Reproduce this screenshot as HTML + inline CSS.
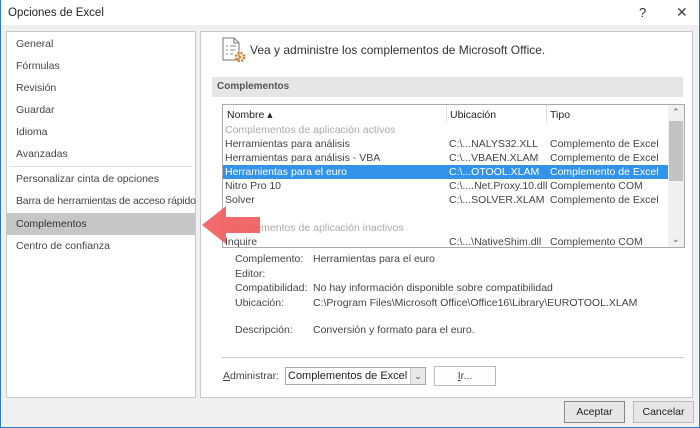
<!DOCTYPE html>
<html><head><style>
*{margin:0;padding:0;box-sizing:border-box}
body{width:700px;height:428px;background:#f0f0f0;font-family:"Liberation Sans",sans-serif;font-size:10.5px;color:#444;position:relative;overflow:hidden}
.a{position:absolute;white-space:nowrap}
.win{position:absolute;left:0;top:0;width:700px;height:428px;border:1px solid #2b79c9;border-top:none}
</style></head><body>
<div class="win"></div>
<div class="a" style="left:1px;top:0;width:698px;height:25px;background:#fff"></div>
<div class="a" style="left:8px;top:7px;font-size:11.5px;color:#222">Opciones de Excel</div>
<div class="a" style="left:639px;top:5px;font-size:13px;color:#333">?</div>
<div class="a" style="left:676px;top:4px;font-size:14px;color:#444;font-weight:300">✕</div>

<div class="a" style="left:6px;top:31px;width:190px;height:367px;background:#fff;border:1px solid #c8c8c8;overflow:hidden"></div>
<div class="a" style="left:16px;top:38px">General</div>
<div class="a" style="left:16px;top:60px">Fórmulas</div>
<div class="a" style="left:16px;top:82px">Revisión</div>
<div class="a" style="left:16px;top:104px">Guardar</div>
<div class="a" style="left:16px;top:126px">Idioma</div>
<div class="a" style="left:16px;top:148px">Avanzadas</div>
<div class="a" style="left:10px;top:166px;width:182px;height:1px;background:#ddd"></div>
<div class="a" style="left:16px;top:173px">Personalizar cinta de opciones</div>
<div class="a" style="left:16px;top:195px;letter-spacing:-0.2px">Barra de herramientas de acceso rápido</div>
<div class="a" style="left:7px;top:213px;width:188px;height:22px;background:#c6c6c6"></div>
<div class="a" style="left:16px;top:218px;color:#333">Complementos</div>
<div class="a" style="left:16px;top:240px">Centro de confianza</div>

<div class="a" style="left:200px;top:31px;width:493px;height:367px;background:#fff;border:1px solid #c8c8c8"></div>
<svg class="a" style="left:222px;top:37px" width="24" height="26" viewBox="0 0 24 26"><path d="M1 1h11l5 5v17H1z" fill="#fff" stroke="#777"/><path d="M12 1v5h5" fill="none" stroke="#777"/><path d="M4 9h2M8 9h6M4 13h2M8 13h5M4 17h2M8 17h3" stroke="#888"/><circle cx="18" cy="20" r="4" fill="none" stroke="#e07b22" stroke-width="2.5" stroke-dasharray="2 1.2"/><circle cx="18" cy="20" r="1.3" fill="#e07b22"/></svg>
<div class="a" style="left:250px;top:43px;font-size:12px;color:#333">Vea y administre los complementos de Microsoft Office.</div>
<div class="a" style="left:212px;top:77px;width:471px;height:20px;background:#e6e6e6"></div>
<div class="a" style="left:217px;top:81px;font-weight:bold;color:#555;font-size:10px">Complementos</div>

<div class="a" style="left:222px;top:104px;width:463px;height:144px;border:1px solid #aaa;background:#fff"></div>
<div class="a" style="left:446px;top:105px;width:1px;height:17px;background:#e0e0e0"></div>
<div class="a" style="left:546px;top:105px;width:1px;height:17px;background:#e0e0e0"></div>
<div class="a" style="left:227px;top:109px;color:#222">Nombre ▴</div>
<div class="a" style="left:450px;top:109px;color:#222">Ubicación</div>
<div class="a" style="left:550px;top:109px;color:#222">Tipo</div>
<div class="a" style="left:668px;top:105px;width:16px;height:142px;background:#f0f0f0"></div>
<div class="a" style="left:669px;top:121px;width:14px;height:60px;background:#c2c2c2"></div>
<div class="a" style="left:672px;top:107px;font-size:9px;color:#555">⌃</div>
<div class="a" style="left:672px;top:234px;font-size:9px;color:#555">⌄</div>
<div class="a" style="left:225px;top:124px;color:#aaa">Complementos de aplicación activos</div>
<div class="a" style="left:225px;top:138px">Herramientas para análisis</div><div class="a" style="left:449px;top:138px">C:\...NALYS32.XLL</div><div class="a" style="left:550px;top:138px">Complemento de Excel</div>
<div class="a" style="left:225px;top:152px">Herramientas para análisis - VBA</div><div class="a" style="left:449px;top:152px">C:\...VBAEN.XLAM</div><div class="a" style="left:550px;top:152px">Complemento de Excel</div>
<div class="a" style="left:223px;top:165px;width:445px;height:14px;background:#3393ea"></div>
<div class="a" style="left:225px;top:166px;color:#fff">Herramientas para el euro</div><div class="a" style="left:449px;top:166px;color:#fff">C:\...OTOOL.XLAM</div><div class="a" style="left:550px;top:166px;color:#fff">Complemento de Excel</div>
<div class="a" style="left:225px;top:180px">Nitro Pro 10</div><div class="a" style="left:449px;top:180px">C:\....Net.Proxy.10.dll</div><div class="a" style="left:550px;top:180px">Complemento COM</div>
<div class="a" style="left:225px;top:194px">Solver</div><div class="a" style="left:449px;top:194px">C:\...SOLVER.XLAM</div><div class="a" style="left:550px;top:194px">Complemento de Excel</div>
<div class="a" style="left:225px;top:222px;color:#aaa">Complementos de aplicación inactivos</div>
<div class="a" style="left:225px;top:236px">Inquire</div><div class="a" style="left:449px;top:236px">C:\...\NativeShim.dll</div><div class="a" style="left:550px;top:236px">Complemento COM</div>

<div class="a" style="left:235px;top:253px">Complemento:</div><div class="a" style="left:313px;top:253px">Herramientas para el euro</div>
<div class="a" style="left:235px;top:268px">Editor:</div>
<div class="a" style="left:235px;top:282px">Compatibilidad:</div><div class="a" style="left:313px;top:282px">No hay información disponible sobre compatibilidad</div>
<div class="a" style="left:235px;top:297px">Ubicación:</div><div class="a" style="left:313px;top:297px">C:\Program Files\Microsoft Office\Office16\Library\EUROTOOL.XLAM</div>
<div class="a" style="left:235px;top:324px">Descripción:</div><div class="a" style="left:313px;top:324px">Conversión y formato para el euro.</div>
<div class="a" style="left:222px;top:357px;width:462px;height:1px;background:#ccc"></div>
<div class="a" style="left:223px;top:370px"><u>A</u>dministrar:</div>
<div class="a" style="left:285px;top:367px;width:141px;height:18px;border:1px solid #aaa;background:#fff"></div>
<div class="a" style="left:288px;top:370px;color:#222;font-size:11px">Complementos de Excel</div>
<div class="a" style="left:410px;top:368px;width:15px;height:16px;background:#e8e8e8;border-left:1px solid #ccc;text-align:center;font-size:9px;line-height:16px">⌄</div>
<div class="a" style="left:434px;top:366px;width:62px;height:20px;border:1px solid #bbb;background:#fdfdfd;text-align:center;line-height:18px"><u>I</u>r...</div>

<div class="a" style="left:564px;top:401px;width:61px;height:22px;border:1px solid #888;background:#e6e6e6;text-align:center;line-height:20px;color:#222">Aceptar</div>
<div class="a" style="left:633px;top:401px;width:61px;height:22px;border:1px solid #bbb;background:#e6e6e6;text-align:center;line-height:20px;color:#222">Cancelar</div>

<svg class="a" style="left:200px;top:204px" width="62" height="42" viewBox="0 0 62 42"><path d="M2 21L26 2v11h34v16H26v11z" fill="#f25a5a" opacity="0.9"/></svg>
</body></html>
